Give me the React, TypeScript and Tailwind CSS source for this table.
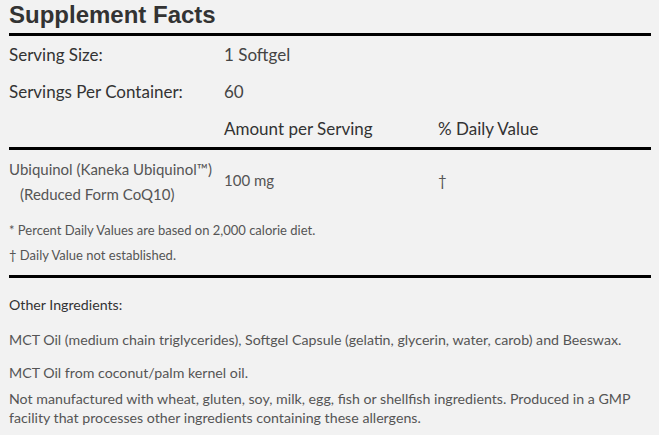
import React from 'react';

const body = { fontFamily: 'Lato, "Open Sans", sans-serif' };

export default function App() {
  return (
    <div className="min-h-screen bg-[#f2f2f2] pl-[9px] pr-[8px] text-[#444]" style={body}>
      <h2 className="h-[33px] pt-[1px] text-[24px] font-bold leading-[28px] text-[#333] [font-family:'Liberation_Sans',Arial,sans-serif]">
        Supplement Facts
      </h2>

      <div className="border-t-[3px] border-black">
        <div className="grid h-[37px] grid-cols-[215px_214px_1fr] items-center text-[17px] text-[#333]">
          <span>Serving Size:</span>
          <span className="text-[#444]">1 Softgel</span>
          <span />
        </div>
        <div className="grid h-[37px] grid-cols-[215px_214px_1fr] items-center text-[17px] text-[#333]">
          <span>Servings Per Container:</span>
          <span className="text-[#444]">60</span>
          <span />
        </div>
        <div className="grid h-[37px] grid-cols-[215px_214px_1fr] items-center text-[17px] text-[#333]">
          <span />
          <span>Amount per Serving</span>
          <span>% Daily Value</span>
        </div>
      </div>

      <div className="border-t-[3px] border-black pt-[7px]">
        <div className="grid grid-cols-[215px_214px_1fr] items-center text-[15px] text-[#555]">
          <div className="leading-[25px]">
            <div>Ubiquinol (Kaneka Ubiquinol™)</div>
            <div className="pl-[11px]">(Reduced Form CoQ10)</div>
          </div>
          <span className="-mt-[4px]">100 mg</span>
          <span className="-mt-[4px]">†</span>
        </div>
        <div className="mt-[11px] text-[13px] leading-[25px] text-[#555]">
          <p>* Percent Daily Values are based on 2,000 calorie diet.</p>
          <p>† Daily Value not established.</p>
        </div>
      </div>

      <div className="mt-[7px] border-t-[3px] border-black pt-[15px] text-[14.2px] text-[#555]">
        <p className="leading-[24px] text-[#333]">Other Ingredients:</p>
        <p className="mt-[11px] leading-[24px]">
          MCT Oil (medium chain triglycerides), Softgel Capsule (gelatin, glycerin, water, carob) and Beeswax.
        </p>
        <p className="mt-[9px] leading-[24px]">MCT Oil from coconut/palm kernel oil.</p>
        <p className="mt-[4px] leading-[19px]">
          Not manufactured with wheat, gluten, soy, milk, egg, fish or shellfish ingredients. Produced in a GMP
          <br />
          facility that processes other ingredients containing these allergens.
        </p>
      </div>
    </div>
  );
}
